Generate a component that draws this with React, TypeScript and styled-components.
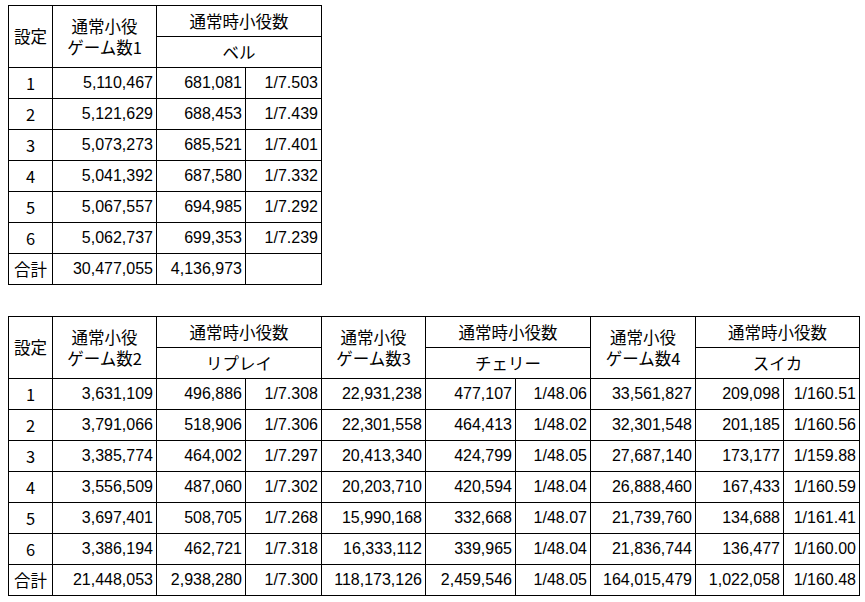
import React from 'react'
import styled, { createGlobalStyle } from 'styled-components'

const GlobalStyle = createGlobalStyle`
  html, body {
    margin: 0;
    padding: 0;
    background: #ffffff;
  }
  body {
    font-family: 'Liberation Sans', Arial, 'Noto Sans CJK JP', sans-serif;
    font-size: 16px;
    color: #000000;
  }
`

const Page = styled.div`
  display: flex;
  flex-direction: column;
  align-items: flex-start;
  gap: 31px;
  padding: 5px 0 0 8px;
`

const Table = styled.table`
  border-collapse: collapse;
  table-layout: fixed;
`

const Row = styled.tr`
  height: 31px;
`

const HeadCell = styled.td`
  border: 1px solid #000;
  padding: 0;
  text-align: center;
  vertical-align: middle;
  font-family: 'Noto Sans CJK JP', 'Liberation Sans', sans-serif;
  font-size: 16.5px;
  line-height: 21px;
  white-space: nowrap;
`

const HeadLine = styled.span`
  display: block;
  line-height: 21px;
`

const Cell = styled.td<{ $align?: 'center' | 'right' }>`
  border: 1px solid #000;
  padding: ${({ $align }) => ($align === 'center' ? '0' : '0 3px 0 0')};
  text-align: ${({ $align }) => $align ?? 'right'};
  vertical-align: middle;
  white-space: nowrap;
  font-family: ${({ $align }) =>
    $align === 'center'
      ? "'Noto Sans CJK JP', 'Liberation Sans', sans-serif"
      : "'Liberation Sans', Arial, sans-serif"};
  font-size: ${({ $align }) => ($align === 'center' ? '16.5px' : '16px')};
`

interface IGroup {
  gamesLabel: string
  role: string
  rows: [string, string, string][]
  total: [string, string, string]
}

const settings = ['1', '2', '3', '4', '5', '6']

const bell: IGroup = {
  gamesLabel: 'ゲーム数1',
  role: 'ベル',
  rows: [
    ['5,110,467', '681,081', '1/7.503'],
    ['5,121,629', '688,453', '1/7.439'],
    ['5,073,273', '685,521', '1/7.401'],
    ['5,041,392', '687,580', '1/7.332'],
    ['5,067,557', '694,985', '1/7.292'],
    ['5,062,737', '699,353', '1/7.239'],
  ],
  total: ['30,477,055', '4,136,973', ''],
}

const groups: IGroup[] = [
  {
    gamesLabel: 'ゲーム数2',
    role: 'リプレイ',
    rows: [
      ['3,631,109', '496,886', '1/7.308'],
      ['3,791,066', '518,906', '1/7.306'],
      ['3,385,774', '464,002', '1/7.297'],
      ['3,556,509', '487,060', '1/7.302'],
      ['3,697,401', '508,705', '1/7.268'],
      ['3,386,194', '462,721', '1/7.318'],
    ],
    total: ['21,448,053', '2,938,280', '1/7.300'],
  },
  {
    gamesLabel: 'ゲーム数3',
    role: 'チェリー',
    rows: [
      ['22,931,238', '477,107', '1/48.06'],
      ['22,301,558', '464,413', '1/48.02'],
      ['20,413,340', '424,799', '1/48.05'],
      ['20,203,710', '420,594', '1/48.04'],
      ['15,990,168', '332,668', '1/48.07'],
      ['16,333,112', '339,965', '1/48.04'],
    ],
    total: ['118,173,126', '2,459,546', '1/48.05'],
  },
  {
    gamesLabel: 'ゲーム数4',
    role: 'スイカ',
    rows: [
      ['33,561,827', '209,098', '1/160.51'],
      ['32,301,548', '201,185', '1/160.56'],
      ['27,687,140', '173,177', '1/159.88'],
      ['26,888,460', '167,433', '1/160.59'],
      ['21,739,760', '134,688', '1/161.41'],
      ['21,836,744', '136,477', '1/160.00'],
    ],
    total: ['164,015,479', '1,022,058', '1/160.48'],
  },
]

function RoleTable({ items, widths }: { items: IGroup[]; widths: number[][] }) {
  return (
    <Table>
      <colgroup>
        <col style={{ width: 44 }} />
        {items.map((g, i) =>
          widths[i].map((w, j) => <col key={`${g.role}-${j}`} style={{ width: w }} />),
        )}
      </colgroup>
      <tbody>
        <Row>
          <HeadCell rowSpan={2}>設定</HeadCell>
          {items.map((g) => (
            <React.Fragment key={g.role}>
              <HeadCell rowSpan={2}>
                <HeadLine>通常小役</HeadLine>
                <HeadLine>{g.gamesLabel}</HeadLine>
              </HeadCell>
              <HeadCell colSpan={2}>通常時小役数</HeadCell>
            </React.Fragment>
          ))}
        </Row>
        <Row>
          {items.map((g) => (
            <HeadCell key={g.role} colSpan={2}>
              {g.role}
            </HeadCell>
          ))}
        </Row>
        {settings.map((s, r) => (
          <Row key={s}>
            <Cell $align="center">{s}</Cell>
            {items.map((g) =>
              g.rows[r].map((v, j) => <Cell key={`${g.role}-${j}`}>{v}</Cell>),
            )}
          </Row>
        ))}
        <Row>
          <Cell $align="center">合計</Cell>
          {items.map((g) => g.total.map((v, j) => <Cell key={`${g.role}-${j}`}>{v}</Cell>))}
        </Row>
      </tbody>
    </Table>
  )
}

export default function App() {
  return (
    <>
      <GlobalStyle />
      <Page>
        <RoleTable items={[bell]} widths={[[104, 89, 76]]} />
        <RoleTable
          items={groups}
          widths={[
            [104, 89, 76],
            [104, 90, 75],
            [105, 88, 76],
          ]}
        />
      </Page>
    </>
  )
}
